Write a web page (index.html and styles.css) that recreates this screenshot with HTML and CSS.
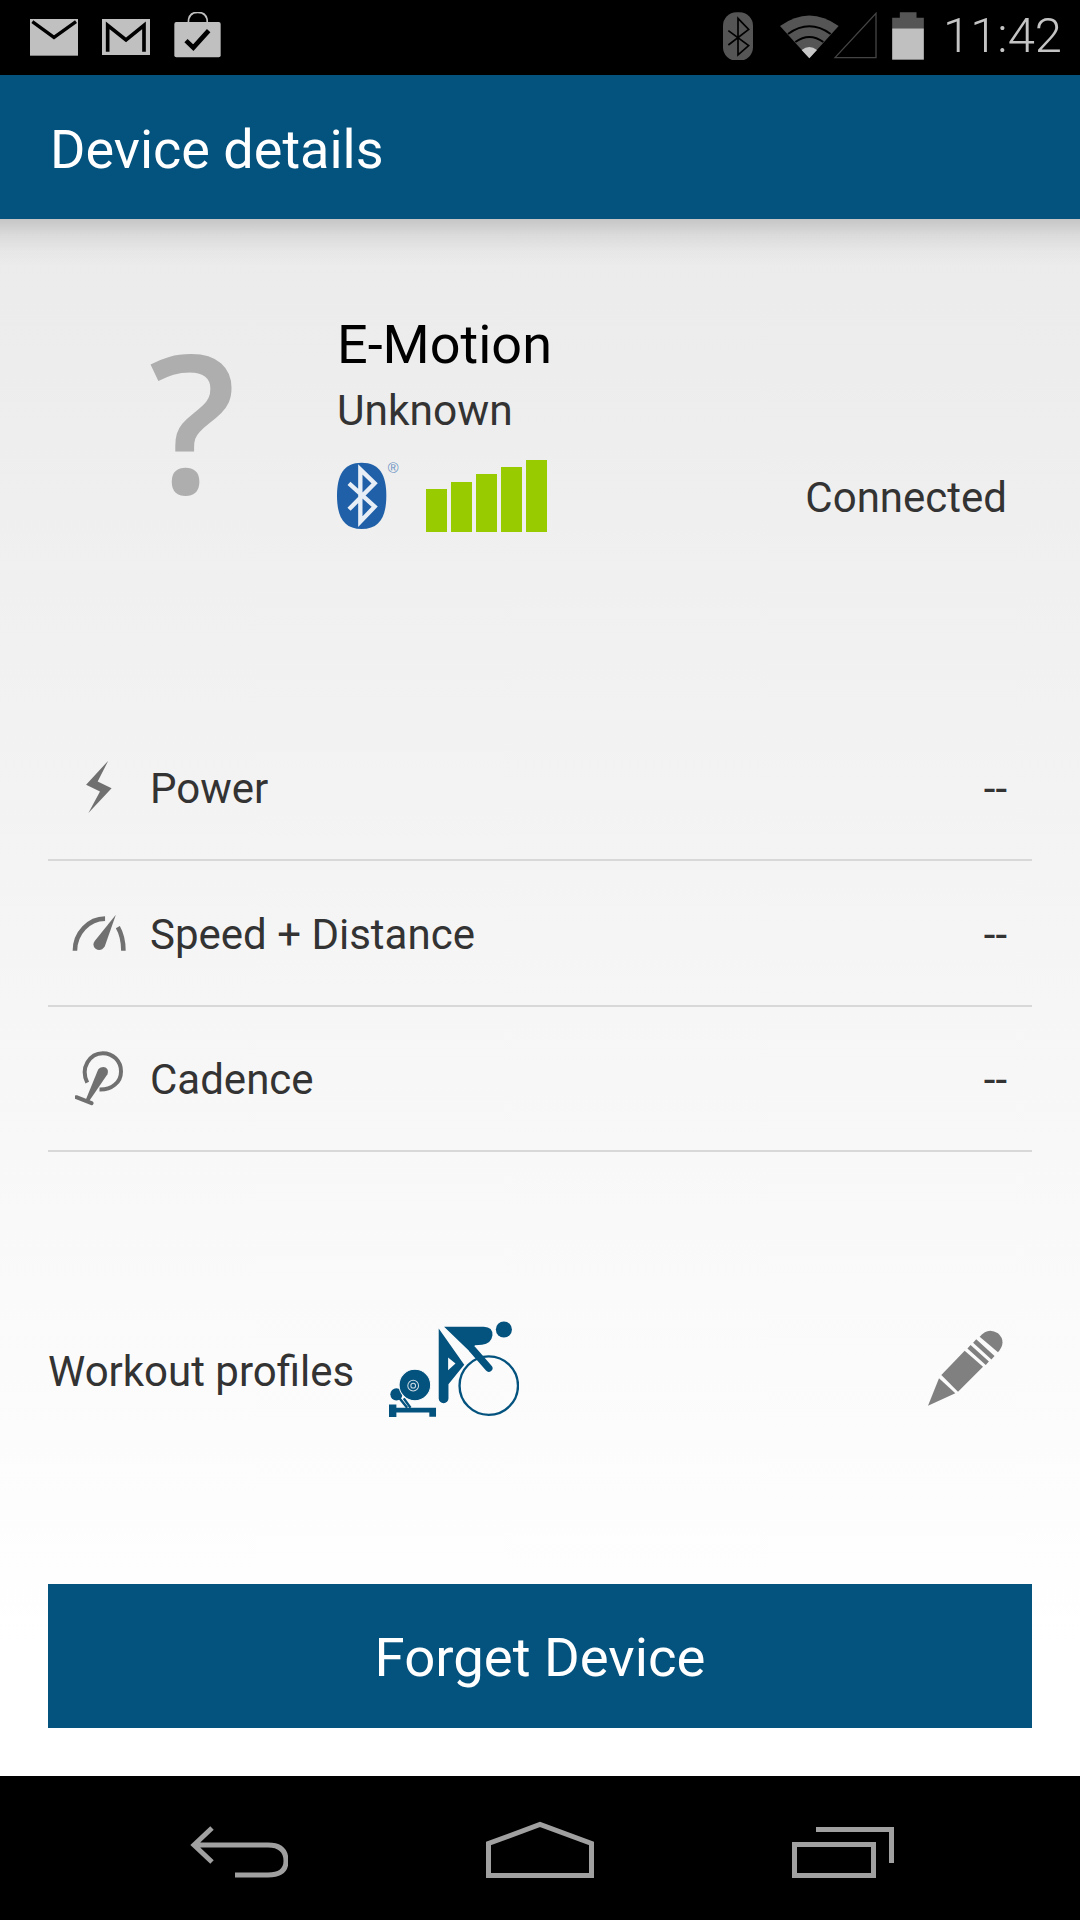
FILE: index.html
```html
<!DOCTYPE html>
<html lang="en">

<head>
    <meta charset="UTF-8">
    <title>Device details</title>
    <link rel="stylesheet" href="styles.css">
</head>

<body>
    <div class="status-bar">
        <svg class="stat-icon" width="48" height="48" viewBox="90 36 144 144">
            <rect x="90" y="57" width="144" height="110" fill="#c0c0c0" />
            <path d="M97 65 L162 112 L228 65" fill="none" stroke="#000" stroke-width="10" />
        </svg>
        <svg class="stat-icon" width="48" height="48" viewBox="306 36 144 144">
            <rect x="306" y="57" width="144" height="108" fill="#c0c0c0" />
            <path d="M323 155 V76 L378 120 L432 76 V155" fill="none" stroke="#000" stroke-width="11" />
        </svg>
        <svg class="stat-icon" width="47" height="48" viewBox="522 36 141 144">
            <path d="M565 68 Q565 37 593 37 Q622 37 622 68" fill="none" stroke="#c0c0c0" stroke-width="5" />
            <rect x="523" y="66" width="139" height="106" rx="6" fill="#c0c0c0" />
            <path d="M558 122 L580 143 L626 92" fill="none" stroke="#000" stroke-width="14" />
        </svg>
        <div class="status-right">
            <svg class="stat-bt" width="30" height="48" viewBox="70 36 90 144">
                <rect x="70" y="37" width="90" height="145" rx="40" fill="#555" />
                <path d="M86 92 L147 137 L115 165 V55 L147 88 L86 135" fill="none" stroke="#000" stroke-width="5" />
            </svg>
            <svg class="stat-net" width="97" height="48" viewBox="240 36 291 144">
                <path d="M405 173 L528 40 V173 Z" fill="none" stroke="#444" stroke-width="4" />
                <path d="M240 78 Q328 15 416 78 L328 175 Z" fill="#555" />
                <path d="M264 102 Q328 56 392 102 M286 126 Q328 96 370 126" fill="none" stroke="#000" stroke-width="6" />
                <path d="M305 150 Q328 132 351 150 L328 175 Z" fill="#c8c8c8" />
            </svg>
            <svg class="stat-batt" width="32" height="48" viewBox="577 36 95 144">
                <path d="M600 37 H650 V53 H672 V85 H577 V53 H600 Z" fill="#555" />
                <rect x="577" y="85" width="95" height="94" fill="#c0c0c0" />
            </svg>
            <span class="clock">11:42</span>
        </div>
    </div>

    <div class="app-bar">Device details</div>

    <div class="content">
        <div class="device">
            <div class="unknown-mark">?</div>
            <div class="device-info">
                <div class="device-name">E-Motion</div>
                <div class="device-type">Unknown</div>
                <div class="device-icons">
                    <svg class="bt-logo" width="70" height="75" viewBox="52 51 210 225">
                        <path d="M126 68 C180 68 200 105 200 167 C200 230 180 267 126 267 C72 267 52 230 52 167 C52 105 72 68 126 68 Z" fill="#2060a8" />
                        <path d="M88 130 L165 200 L122 245 V88 L165 130 L88 208" fill="none" stroke="#e8eef5" stroke-width="13" />
                        <text class="reg" x="204" y="100">®</text>
                    </svg>
                    <div class="signal">
                        <span></span><span></span><span></span><span></span><span></span>
                    </div>
                </div>
            </div>
            <div class="device-state">Connected</div>
        </div>

        <div class="sensors">
            <div class="sensor">
                <div class="sensor-icon">
                    <svg width="26" height="53" viewBox="78 60 78 160">
                        <path d="M145 62 L78 135 L120 155 L85 220 L155 145 L113 125 Z" fill="#707070" />
                    </svg>
                </div>
                <span>Power</span>
                <span class="sensor-value">--</span>
            </div>
            <div class="sensor">
                <div class="sensor-icon">
                    <svg width="54" height="37" viewBox="35 516 163 113">
                        <path d="M43 628 C43 575 85 530 135 530 M174 556 C185 575 191 600 191 628" fill="none" stroke="#707070" stroke-width="14" />
                        <path d="M168 518 L134 615 Q122 632 106 622 Q94 612 104 598 Z" fill="#707070" />
                    </svg>
                </div>
                <span>Speed + Distance</span>
                <span class="sensor-value">--</span>
            </div>
            <div class="sensor">
                <div class="sensor-icon">
                    <svg width="48" height="55" viewBox="50 935 145 165">
                        <path d="M87 1030 C65 985 95 941 134 941 C165 941 189 965 189 996 C189 1030 160 1052 124 1051" fill="none" stroke="#707070" stroke-width="12" />
                        <path d="M120 990 C135 975 155 985 148 1005 L92 1087 L82 1083 Z" fill="#707070" />
                        <path d="M54 1074 L100 1092" fill="none" stroke="#707070" stroke-width="12" stroke-linecap="round" />
                    </svg>
                </div>
                <span>Cadence</span>
                <span class="sensor-value">--</span>
            </div>
        </div>

        <div class="profiles">
            <span>Workout profiles</span>
            <svg class="bike" width="130" height="96" viewBox="58 60 387 285">
                <circle cx="400" cy="85" r="24" fill="#04527e" />
                <circle cx="355" cy="252" r="87" fill="none" stroke="#04527e" stroke-width="7" />
                <path d="M222 77 H340 Q368 78 366 103 Q362 128 335 130 L314 132 L300 152 Z" fill="#04527e" />
                <path d="M307 145 L355 200" fill="none" stroke="#04527e" stroke-width="22" stroke-linecap="round" />
                <path fill-rule="evenodd" d="M206 82 L282 190 L235 248 V290 A14 14 0 0 1 206 290 Z M234 168 V206 L256 186 Z" fill="#04527e" />
                <circle cx="80" cy="278" r="18" fill="#04527e" />
                <circle cx="135" cy="250" r="47" fill="#04527e" stroke="#fafafa" stroke-width="3" />
                <circle cx="130" cy="252" r="16" fill="none" stroke="#d0dde6" stroke-width="3" />
                <circle cx="130" cy="252" r="7" fill="none" stroke="#d0dde6" stroke-width="3" />
                <path d="M88 288 L112 318 M102 290 L122 318" fill="none" stroke="#04527e" stroke-width="7" />
                <path d="M58 308 H80 V318 H198 V345 H178 V332 H80 V346 H58 Z" fill="#04527e" />
            </svg>
            <svg class="pencil" width="76" height="76" viewBox="85 60 228 228">
                <path d="M85 287 L118 205 L167 250 Z" fill="#808080" />
                <path d="M125 195 L195 122 L250 170 L175 245 Z" fill="#808080" />
                <path d="M208 110 L263 160 M225 93 L280 143" fill="none" stroke="#808080" stroke-width="14" />
                <path d="M240 80 Q265 50 295 70 Q322 95 295 127 Z" fill="#808080" />
            </svg>
        </div>

        <div class="forget-btn">Forget Device</div>
    </div>

    <div class="nav-bar">
        <svg width="98" height="52" viewBox="190 1826 98 52">
            <path d="M212 1828 L194 1845 L212 1862 M194 1845 H268 Q286 1845 286 1861 Q286 1875 268 1875 H235" fill="none" stroke="#a0a0a0" stroke-width="5" />
        </svg>
        <svg width="108" height="58" viewBox="486 1820 108 58">
            <path d="M488.500 1875.500 V1843.500 L540 1824.500 L591.500 1843.500 V1875.500 Z" fill="none" stroke="#a0a0a0" stroke-width="5" />
        </svg>
        <svg width="102" height="52" viewBox="792 1826 102 52">
            <path d="M794.500 1844.500 H873.500 V1875.500 H794.500 Z M816 1829.500 H891.500 V1863" fill="none" stroke="#a0a0a0" stroke-width="5" />
        </svg>
    </div>
</body>

</html>
```

FILE: styles.css
```css
* {
    box-sizing: border-box;
}

html,
body {
    margin: 0;
    padding: 0;
}

body {
    width: 1080px;
    height: 1920px;
    display: flex;
    flex-direction: column;
    overflow: hidden;
    font-family: Roboto, sans-serif;
    color: #333;
    background: #000;
}

.status-bar {
    height: 75px;
    flex: none;
    display: flex;
    align-items: flex-start;
    gap: 24px;
    padding: 12px 18px 0 30px;
    background: #000;
}

.status-right {
    margin-left: auto;
    display: flex;
    align-items: flex-start;
}

.stat-net {
    margin-left: 27px;
}

.stat-batt {
    margin-left: 15px;
}

.clock {
    margin-left: 19px;
    font-size: 49px;
    font-weight: 300;
    line-height: 48px;
    color: #c4c4c4;
}

.app-bar {
    height: 144px;
    flex: none;
    display: flex;
    align-items: center;
    padding: 4px 0 0 50px;
    font-size: 54px;
    color: #fff;
    background: #04527e;
}

.content {
    height: 1557px;
    flex: none;
    padding: 0 48px;
    display: flex;
    flex-direction: column;
    background: linear-gradient(rgba(0, 0, 0, 0.16), rgba(0, 0, 0, 0.07) 16px, rgba(0, 0, 0, 0.02) 32px, transparent 48px) no-repeat, linear-gradient(#ebebeb, #fff 92%);
}

.device {
    height: 496px;
    display: flex;
    align-items: flex-start;
    padding-top: 95px;
}

.unknown-mark {
    width: 289px;
    padding: 10px 0 0 0;
    text-align: center;
    font-family: "Open Sans", sans-serif;
    font-weight: 600;
    font-size: 193px;
    line-height: 190px;
    color: #aeaeae;
}

.device-name {
    font-size: 54px;
    line-height: 62px;
    color: #000;
}

.device-type {
    margin-top: 5px;
    font-size: 42.500px;
    line-height: 60px;
}

.device-icons {
    display: flex;
    align-items: flex-end;
    margin-top: 16px;
}

.reg {
    font-family: "Liberation Sans", sans-serif;
    font-size: 44px;
    fill: #6c93c4;
}

.signal {
    display: flex;
    align-items: flex-end;
    gap: 4px;
    margin-left: 19px;
}

.signal span {
    width: 21px;
    background: #99cc00;
}

.signal span:nth-child(1) {
    height: 43px;
}

.signal span:nth-child(2) {
    height: 50px;
}

.signal span:nth-child(3) {
    height: 58px;
}

.signal span:nth-child(4) {
    height: 65px;
}

.signal span:nth-child(5) {
    height: 72px;
}

.device-state {
    margin-left: auto;
    padding: 159px 25px 0 0;
    font-size: 42px;
    line-height: 50px;
}

.sensor {
    height: 145.750px;
    display: flex;
    align-items: center;
    font-size: 42px;
    border-bottom: 2px solid #d8d8d8;
}

.sensor > span {
    padding-top: 3px;
}

.sensor-icon {
    width: 102px;
    display: flex;
    justify-content: center;
    padding-right: 1px;
}

.sensor-value {
    margin-left: auto;
    margin-right: 25px;
}

.profiles {
    height: 250px;
    margin-top: 94px;
    display: flex;
    align-items: center;
    font-size: 42px;
}

.bike {
    margin: 0 0 4px 35px;
}

.pencil {
    margin: 0 28px 6px auto;
}

.forget-btn {
    height: 144px;
    margin-top: 87.750px;
    display: flex;
    align-items: center;
    justify-content: center;
    font-size: 54.500px;
    padding-top: 2px;
    color: #fff;
    background: #04527e;
}

.nav-bar {
    height: 144px;
    flex: none;
    background: #000;
    display: flex;
    align-items: flex-end;
    padding: 0 186px 42px 190px;
    justify-content: space-between;
}
```
